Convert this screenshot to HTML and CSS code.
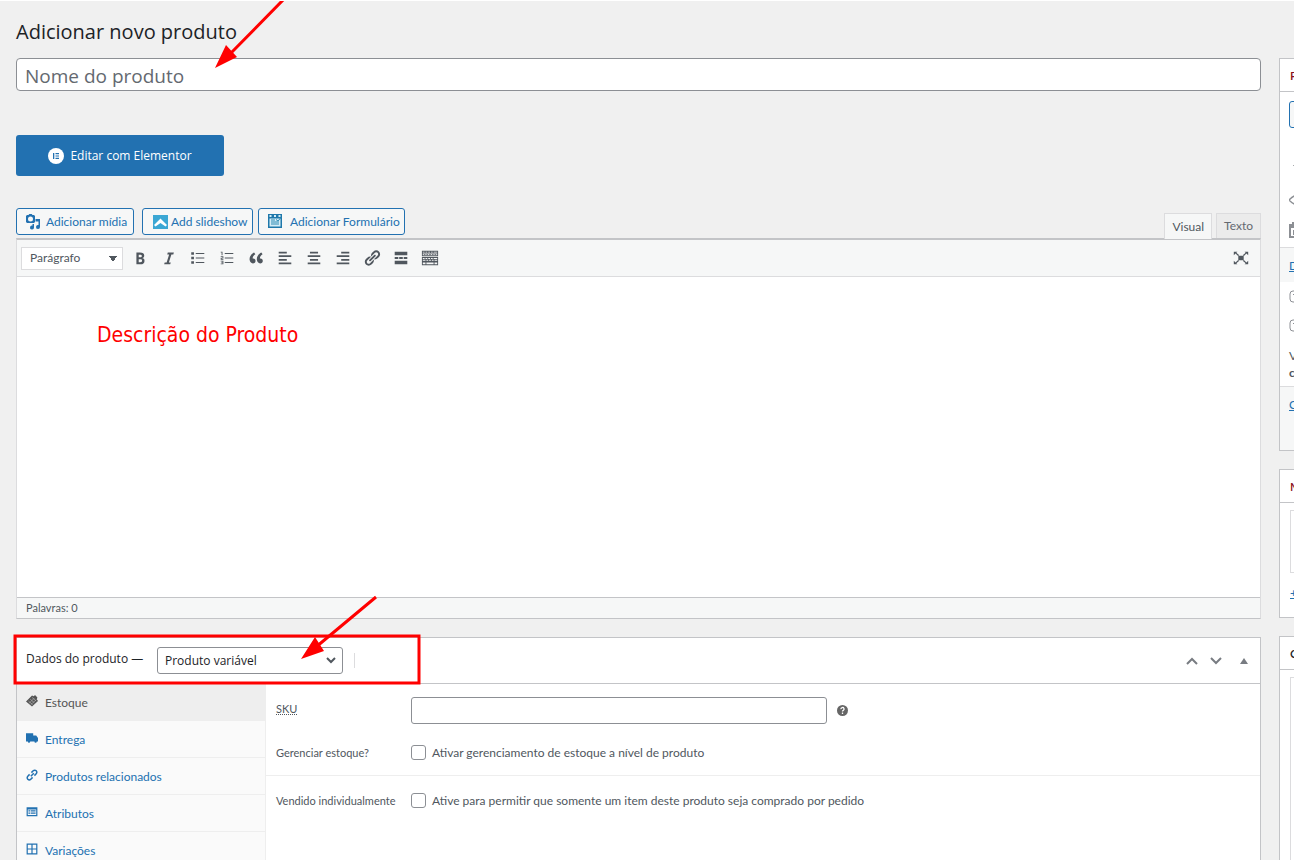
FILE: index.html
```html
<!DOCTYPE html>
<html lang="pt-BR">
<head>
  <meta charset="UTF-8">
  <title>Adicionar novo produto</title>
  <link rel="stylesheet" href="styles.css">
</head>
<body>
  <div class="wrap">
    <main class="post-body">
      <h1 class="page-title">Adicionar novo produto</h1>
      <input class="title-input" type="text" placeholder="Nome do produto" aria-label="Nome do produto">

      <button class="elementor-btn">
        <svg width="16" height="16" viewBox="0 0 16 16"><circle cx="8" cy="8" r="8" fill="#fff"/><path d="M5 5h1.3v6H5zM7.5 5H11v1.2H7.500zM7.500 7.400H11v1.200H7.500zM7.500 9.800H11V11H7.500z" fill="#2271b1"/></svg>
        Editar com Elementor
      </button>

      <div class="editor-tools">
        <div class="media-buttons">
          <button class="button media">
            <svg width="16" height="16" viewBox="0 0 16 16"><path fill="#2271b1" fill-rule="evenodd" d="M2 1h1.500l.8-1h2.400l.8 1H9l1 1v6L9 9H2L1 8V2zM5.500 2.500a2.500 2.500 0 1 0 0 5 2.500 2.500 0 0 0 0-5zM10.500 5h4.500v8a2 2 0 1 1-1.500-1.900V7.500h-3zM9 10v3.500a2 2 0 1 1-1.500-1.900V10z"/></svg>
            Adicionar mídia
          </button>
          <button class="button slides">
            <svg width="15" height="14" viewBox="0 0 15 14"><path fill="#3ba7d4" d="M0 0h15v14H0z"/><path d="M1 10l6.500-6.500L14 10l-1.500 1.500-5-3.500-5 3.500z" fill="#fff"/></svg>
            Add slideshow
          </button>
          <button class="button form">
            <svg width="15" height="15" viewBox="0 0 15 15"><path fill="#1f78ab" d="M0 0h14v14H0z"/><path fill="#d5edf6" d="M1.500 4.500h11v8h-11zM1.500 1h2v2h-2zM6 1h2v2H6zM10.500 1h2v2h-2z"/><path d="M3 6h4M3 8h8M3 10h8M8 5.500l2 1.500 3-3.500" fill="none" stroke="#2d8bb5"/></svg>
            Adicionar Formulário
          </button>
        </div>
        <div class="editor-tabs">
          <button class="editor-tab active">Visual</button>
          <button class="editor-tab">Texto</button>
        </div>
      </div>

      <section class="editor">
        <div class="toolbar">
          <select class="format" aria-label="Formato"><option>Parágrafo</option></select>
          <button class="tool" aria-label="Negrito"><svg viewBox="0 0 20 20"><path d="M6 4v13h4.540c1.370 0 2.460-.33 3.260-1 .8-.66 1.200-1.580 1.200-2.770 0-.84-.17-1.510-.51-2.010s-.9-.85-1.670-1.030v-.09c.57-.1 1.020-.4 1.360-.9s.51-1.130.51-1.910c0-1.140-.39-1.980-1.170-2.500C12.750 4.260 11.500 4 9.780 4H6zm2.570 5.150V6.260h1.360c.73 0 1.270.11 1.610.32.34.22.51.58.51 1.070 0 .54-.16.920-.47 1.150s-.82.35-1.510.35h-1.500zm0 2.190h1.600c1.440 0 2.160.53 2.160 1.610 0 .6-.17 1.050-.51 1.340s-.86.430-1.570.430H8.570v-3.380z"/></svg></button>
          <button class="tool" aria-label="Itálico"><svg viewBox="0 0 20 20"><path d="M14.780 6h-2.130l-2.800 9h2.120l-.62 2H4.600l.62-2h2.140l2.800-9H8.030l.62-2h6.750z"/></svg></button>
          <button class="tool" aria-label="Lista com marcadores"><svg viewBox="0 0 20 20"><path d="M2.500 3.500h3v3h-3zM2.500 8.500h3v3h-3zM2.500 13.500h3v3h-3zM7.500 4.500H17v1H7.500zM7.500 9.500H17v1H7.500zM7.500 14.500H17v1H7.500z"/></svg></button>
          <button class="tool" aria-label="Lista numerada"><svg viewBox="0 0 20 20"><path d="M3 3h2v4H4V4H3zM3 8h3v2.500H4v.7h2v.8H3V9.700h2v-.9H3zM3 13h3v4H3v-.8h2v-.8H3.500v-.8H5v-.8H3zM7.500 4.500H17v1H7.500zM7.500 9.500H17v1H7.500zM7.500 14.500H17v1H7.500z"/></svg></button>
          <button class="tool" aria-label="Citação"><svg viewBox="0 0 20 20"><path d="M9.490 13.220c0-.74-.2-1.380-.61-1.900-.62-.78-1.830-.88-2.530-.72-.29-1.650 1.110-3.750 2.920-4.650L7.880 4c-2.730 1.300-5.420 4.280-4.960 8.050C3.210 14.430 4.590 16 6.540 16c.85 0 1.560-.25 2.120-.75s.83-1.180.83-2.030zm8.050 0c0-.74-.2-1.380-.61-1.900-.63-.78-1.830-.88-2.530-.72-.29-1.650 1.110-3.750 2.920-4.650L15.930 4c-2.730 1.300-5.410 4.280-4.950 8.050.29 2.380 1.660 3.950 3.610 3.950.85 0 1.560-.25 2.120-.75s.83-1.180.83-2.030z"/></svg></button>
          <button class="tool" aria-label="Alinhar à esquerda"><svg viewBox="0 0 20 20"><path d="M3 3h9v2H3zM3 7h14v2H3zM3 11h9v2H3zM3 15h14v2H3z"/></svg></button>
          <button class="tool" aria-label="Centralizar"><svg viewBox="0 0 20 20"><path d="M5.500 3h9v2h-9zM3 7h14v2H3zM5.500 11h9v2h-9zM3 15h14v2H3z"/></svg></button>
          <button class="tool" aria-label="Alinhar à direita"><svg viewBox="0 0 20 20"><path d="M8 3h9v2H8zM3 7h14v2H3zM8 11h9v2H8zM3 15h14v2H3z"/></svg></button>
          <button class="tool" aria-label="Inserir link"><svg viewBox="0 0 20 20"><path d="M17.740 2.760c1.680 1.690 1.680 4.410 0 6.100l-1.530 1.520c-1.120 1.120-2.700 1.470-4.140 1.090l2.620-2.610.76-.77.760-.76c.84-.84.84-2.200 0-3.040-.84-.85-2.200-.85-3.040 0l-.77.76-3.380 3.380c-.37-1.440-.02-3.020 1.100-4.140l1.520-1.530c1.690-1.680 4.420-1.680 6.100 0zM8.590 13.430l5.340-5.340c.42-.42.42-1.100 0-1.520-.44-.43-1.130-.39-1.530 0l-5.330 5.340c-.42.42-.42 1.100 0 1.520.44.430 1.130.390 1.520 0zm-.76 2.290l4.140-4.150c.38 1.440.03 3.020-1.090 4.140l-1.520 1.530c-1.690 1.680-4.410 1.680-6.100 0-1.680-1.680-1.680-4.420 0-6.100l1.530-1.520c1.120-1.120 2.700-1.470 4.140-1.100l-4.140 4.150c-.85.84-.85 2.200 0 3.050.84.840 2.200.84 3.040 0z"/></svg></button>
          <button class="tool" aria-label="Leia mais"><svg viewBox="0 0 20 20"><path d="M17 7V3H3v4h14zM3 9h4v2H3zM8 9h4v2H8zM13 9h4v2h-4zM17 17v-4H3v4h14z"/></svg></button>
          <button class="tool" aria-label="Alternar barra de ferramentas"><svg viewBox="0 0 20 20"><path fill-rule="evenodd" d="M1 2h18v6H1zM2 3v1h2V3zM5 3v1h2V3zM8 3v1h2V3zM11 3v1h2V3zM14 3v1h4V3zM2 5v2h16V5zM3 5.500h2v1H3zM6 5.500h2v1H6zM9 5.500h2v1H9zM12 5.500h2v1h-2zM15 5.500h2v1h-2zM1 9h18v9H1zM2 10v1h2v-1zM5 10v1h2v-1zM8 10v1h2v-1zM11 10v1h2v-1zM14 10v1h4v-1zM2 12v1h3v-1zM6 12v1h2v-1zM9 12v1h2v-1zM12 12v1h2v-1zM15 12v1h3v-1zM2 15v2h3v-2zM6 15v2h8v-2zM15 15v2h3v-2z"/></svg></button>
          <button class="tool fullscreen" aria-label="Tela cheia"><svg viewBox="0 0 20 20"><path d="M7 7.500h6v5H7zM2 3h4L4.800 4.200l3 2.500-1 1-2.900-2.600L2 7zM18 3v4l-1.900-1.900-2.900 2.600-1-1 3-2.500L14 3zM2 17v-4l1.900 1.900 2.900-2.600 1 1-3 2.500L6 17zM18 17h-4l1.200-1.200-3-2.500 1-1 2.900 2.600L18 13z"/></svg></button>
        </div>
        <div class="editor-content">
          <p class="note">Descrição do Produto</p>
        </div>
        <div class="statusbar">Palavras: 0</div>
      </section>

      <section class="product-data">
        <header class="box-header">
          <label for="product-type">Dados do produto —</label>
          <select id="product-type" class="product-type"><option>Produto variável</option></select>
          <span class="divider"></span>
          <div class="handles">
            <button aria-label="Mover para cima"><svg width="12" height="8" viewBox="0 0 12 8"><path d="M1 7l5-5 5 5"/></svg></button>
            <button aria-label="Mover para baixo"><svg width="12" height="8" viewBox="0 0 12 8"><path d="M1 1l5 5 5-5"/></svg></button>
            <button aria-label="Alternar painel"><svg width="8" height="8" viewBox="0 0 8 8"><path class="solid" d="M4 1l4 6H0z"/></svg></button>
          </div>
        </header>
        <div class="panel-wrap">
          <nav class="data-tabs">
            <a href="#" class="active"><svg viewBox="0 0 20 20"><path d="M0 11L10 1l3 1 2-2 4 4-1 3 2 3-10 9z"/><path d="M4 10l7 6M7 7l7 6M10 4l7 6M5 14l9-9M8 16l9-8" stroke="#bbb" fill="none"/></svg>Estoque</a>
            <a href="#"><svg viewBox="0 0 20 20"><path d="M0 2h12v4h5l3 4v6h-2a2 2 0 0 1-4 0H7a2 2 0 0 1-4 0H0z"/></svg>Entrega</a>
            <a href="#"><svg viewBox="0 0 20 20"><path d="M8 12l5-5M9 6l3-3a3.500 3.500 0 0 1 5 5l-3 3M11 14l-3 3a3.500 3.500 0 0 1-5-5l3-3" fill="none" stroke="#2271b1" stroke-width="2.500"/></svg>Produtos relacionados</a>
            <a href="#"><svg viewBox="0 0 20 20"><path fill-rule="evenodd" d="M1 2h18v15H1zM3 6v9h14V6zM4 7h3v2H4zM8 7h8v2H8zM4 11h3v2H4zM8 11h8v2H8z"/></svg>Atributos</a>
            <a href="#"><svg viewBox="0 0 20 20"><path fill-rule="evenodd" d="M1 1h18v18H1zM3 3v6h6V3zM11 3v6h6V3zM3 11v6h6v-6zM11 11v6h6v-6z"/></svg>Variações</a>
          </nav>
          <div class="panel">
            <div class="group">
              <div class="field sku">
                <label for="sku"><abbr>SKU</abbr></label>
                <input id="sku" class="text" type="text">
                <svg class="help" width="11" height="11" viewBox="0 0 12 12"><circle cx="6" cy="6" r="6" fill="#666"/><path d="M4.300 4.500a1.700 1.700 0 1 1 2.500 1.400q-.8.400-.8 1.300M6 8.300v1.400" fill="none" stroke="#fff" stroke-width="1.400"/></svg>
              </div>
              <div class="field">
                <label for="stock">Gerenciar estoque?</label>
                <input id="stock" type="checkbox">
                <span class="description">Ativar gerenciamento de estoque a nível de produto</span>
              </div>
            </div>
            <div class="group">
              <div class="field">
                <label for="single">Vendido individualmente</label>
                <input id="single" type="checkbox">
                <span class="description">Ative para permitir que somente um item deste produto seja comprado por pedido</span>
              </div>
            </div>
          </div>
        </div>
      </section>
    </main>

    <aside class="side">
      <section class="side-box publish">
        <h2>P</h2>
        <div class="publish-body">
          <button class="side-btn" aria-label="Salvar"></button>
          <svg class="pin" width="16" height="16" viewBox="0 0 16 16"><path d="M4 8l3-3M5 9l4 4" stroke="#a7aaad" fill="none"/></svg>
          <svg width="16" height="16" viewBox="0 0 16 16"><path d="M0 8q8-9 16 0-8 9-16 0z" fill="none" stroke="#8c8f94" stroke-width="1.500"/><circle cx="8" cy="8" r="3" fill="#8c8f94"/></svg>
          <svg width="16" height="16" viewBox="0 0 16 16"><path d="M1 3h14v12H1zM4 0v5M1 5h14" fill="none" stroke="#8c8f94" stroke-width="2"/><path d="M4 8h3v5H4z" fill="#8c8f94"/></svg>
        </div>
        <div class="shaded copy"><a href="#">D</a></div>
        <div class="extras">
          <svg width="16" height="16" viewBox="0 0 16 16"><path d="M4 2h9q2 0 2 2v7q0 2-2 2H4q-3 0-3-3V5q0-3 3-3zM4 5l2 2" fill="none" stroke="#8c8f94"/></svg>
          <svg width="16" height="16" viewBox="0 0 16 16"><path d="M4 2h9q2 0 2 2v7q0 2-2 2H4q-3 0-3-3V5q0-3 3-3zM4 5l2 2" fill="none" stroke="#8c8f94"/></svg>
          <p>V<br><b>c</b></p>
        </div>
        <div class="shaded actions"><a href="#">C</a></div>
      </section>
      <section class="side-box metrics">
        <h2>M</h2>
        <div class="inner"></div>
        <a href="#">+</a>
      </section>
      <section class="side-box categories">
        <h2>C</h2>
        <div class="inner"></div>
      </section>
    </aside>

    <svg class="marks" width="440" height="700" viewBox="0 0 440 700">
      <path d="M285-2L230 54M376 597L316 647" stroke="#f00" stroke-width="3" fill="none"/>
      <path d="M215 68l11-23 11 12zM301 659l14-22 9 14z" fill="#f00"/>
      <path d="M15 636h404v47H15z" stroke="#f00" stroke-width="3" fill="none"/>
    </svg>
  </div>
</body>
</html>
```
FILE: styles.css
```css
:root {
  --blue: #2271b1;
  --border: #c3c4c7;
  --border-light: #dcdcde;
  --field: #8c8f94;
  --text: #50575e;
  --dark: #1d2327;
  --shade: #f6f7f7;
  --font-ui: "Open Sans", "Noto Sans", sans-serif;
  --font-small: Lato, "Open Sans", sans-serif;
}

* {
  box-sizing: border-box;
  margin: 0;
  padding: 0;
}

body {
  background: #f0f0f0;
  color: var(--text);
  font-family: var(--font-small);
  font-size: 12px;
  line-height: 18px;
}

button,
input,
select {
  font: inherit;
  color: inherit;
}

a {
  color: var(--blue);
}

.wrap {
  position: relative;
  display: grid;
  grid-template-columns: minmax(0, 1fr) 15px;
  gap: 18px;
  height: 100vh;
  padding-left: 16px;
  border-top: 1px solid #fff;
  overflow: hidden;
}

.page-title {
  padding-top: 17px;
  font-family: var(--font-ui);
  font-size: 20px;
  font-weight: 400;
  line-height: 28px;
  color: var(--dark);
}

.title-input {
  display: block;
  width: 100%;
  height: 33px;
  margin-top: 12px;
  padding: 2px 8px 0;
  border: 1px solid var(--field);
  border-radius: 4px;
  background: #fff;
  font-family: var(--font-ui);
  font-size: 19px;
}
.title-input::placeholder {
  color: #646970;
}

.elementor-btn {
  display: flex;
  align-items: center;
  justify-content: center;
  gap: 6px;
  width: 208px;
  height: 41px;
  margin-top: 44px;
  border: none;
  border-radius: 3px;
  background: var(--blue);
  color: #fff;
  font-family: var(--font-ui);
}

.editor-tools {
  display: flex;
  justify-content: space-between;
  align-items: flex-end;
  margin-top: 32px;
}

.media-buttons {
  display: flex;
  padding-bottom: 3px;
}

.button {
  display: flex;
  align-items: center;
  height: 27px;
  border: 1px solid var(--blue);
  border-radius: 3px;
  background: var(--shade);
  color: var(--blue);
  white-space: nowrap;
}
.media {
  width: 118px;
  gap: 5px;
  padding-left: 8px;
  margin-right: 8px;
}
.slides {
  width: 111px;
  gap: 3px;
  padding-left: 10px;
  margin-right: 5px;
}
.form {
  width: 147px;
  gap: 7px;
  padding-left: 9px;
}

.editor-tabs {
  display: flex;
  gap: 4px;
}

.editor-tab {
  height: 25px;
  padding: 0 7px;
  border: 1px solid var(--border-light);
  border-bottom: none;
  background: #ebebeb;
  color: #646970;
}
.editor-tab.active {
  position: relative;
  height: 26px;
  margin-bottom: -1px;
  background: var(--shade);
  color: var(--text);
}

.editor {
  border: 1px solid var(--border-light);
  border-top: 2px solid var(--border);
  border-bottom-color: var(--border);
}

.toolbar {
  display: flex;
  align-items: center;
  gap: 5px;
  height: 37px;
  padding: 0 7px 0 4px;
  border-bottom: 1px solid var(--border-light);
  background: var(--shade);
}

.format {
  width: 102px;
  height: 23px;
  padding-left: 8px;
  border: 1px solid var(--border-light);
  background: #fff;
  appearance: none;
  background-image: linear-gradient(to bottom right, var(--text) 50%, transparent 50%), linear-gradient(to bottom left, var(--text) 50%, transparent 50%);
  background-position: 91px 8px, 87px 8px;
  background-size: 4px 6px;
  background-repeat: no-repeat;
}

.tool {
  width: 24px;
  height: 24px;
  border: none;
  background: none;
}
.tool svg {
  display: block;
  width: 18px;
  height: 18px;
  margin: 0 auto;
  fill: var(--text);
}
.fullscreen {
  margin-left: auto;
}

.editor-content {
  height: 320px;
  padding: 44px 80px;
  background: #fff;
}
.note {
  color: #f00;
  font-family: "DejaVu Sans Condensed", "DejaVu Sans", sans-serif;
  font-size: 21px;
  line-height: 28px;
}

.statusbar {
  height: 21px;
  padding: 1px 9px;
  border-top: 1px solid var(--border);
  background: var(--shade);
  font-size: 11px;
}

.product-data {
  margin-top: 18px;
  border: 1px solid var(--border);
  background: #fff;
}

.box-header {
  display: flex;
  align-items: center;
  height: 46px;
  padding: 0 12px 0 9px;
  border-bottom: 1px solid var(--border);
  color: var(--dark);
  font-family: var(--font-ui);
}
.box-header label {
  width: 131px;
  padding-bottom: 3px;
  font-weight: 500;
  white-space: nowrap;
}

.product-type {
  width: 186px;
  height: 27px;
  padding-left: 7px;
  border: 1px solid var(--field);
  border-radius: 3px;
  appearance: none;
  background: #fff url("data:image/svg+xml,%3Csvg xmlns='http://www.w3.org/2000/svg' viewBox='0 0 10 7'%3E%3Cpath d='M1 1l4 4 4-4' fill='none' stroke='%2350575e' stroke-width='2'/%3E%3C/svg%3E") no-repeat right 6px center / 10px 7px;
}

.divider {
  width: 1px;
  height: 15px;
  margin-left: 11px;
  background: var(--border-light);
}

.handles {
  display: flex;
  gap: 12px;
  margin-left: auto;
}
.handles button {
  display: flex;
  align-items: center;
  border: none;
  background: none;
}
.handles button:last-child {
  margin-left: 6px;
}
.handles path {
  fill: none;
  stroke: #787c82;
  stroke-width: 2;
}
.handles .solid {
  fill: #787c82;
  stroke: none;
}

.panel-wrap {
  display: flex;
}

.data-tabs {
  flex: none;
  width: 249px;
  border-right: 1px solid #eee;
  background: #fafafa;
}
.data-tabs a {
  display: flex;
  align-items: center;
  gap: 7px;
  height: 37px;
  padding: 2px 0 0 9px;
  border-bottom: 1px solid #eee;
  text-decoration: none;
}
.data-tabs svg {
  width: 12px;
  height: 12px;
  margin-bottom: 4px;
  fill: currentColor;
}
.data-tabs .active {
  background: #eee;
  color: #555;
}

.panel {
  flex: 1;
}

.group {
  padding: 8px 10px 6px;
  border-bottom: 1px solid #eee;
}
.group:last-child {
  border-bottom: none;
}

.field {
  display: flex;
  align-items: center;
  height: 33px;
}
.field label {
  width: 135px;
  font-size: 11px;
  white-space: nowrap;
}
.field abbr {
  text-decoration: underline dotted;
}
.field input[type="checkbox"] {
  width: 15px;
  height: 15px;
  margin-right: 6px;
  border: 1px solid var(--field);
  border-radius: 3px;
  background: #fff;
  appearance: none;
}

.sku {
  height: 37px;
  margin-bottom: 7px;
}
.sku label {
  padding-bottom: 4px;
}
.text {
  width: 416px;
  height: 27px;
  border: 1px solid var(--field);
  border-radius: 3px;
}
.help {
  margin-left: 10px;
}

.side {
  padding-top: 57px;
}

.side-box {
  width: 280px;
  margin-bottom: 18px;
  border: 1px solid var(--border);
  background: #fff;
}
.side-box h2 {
  height: 33px;
  padding: 8px 10px;
  border-bottom: 1px solid var(--border);
  color: #8a1020;
  font-size: 12px;
  font-weight: 600;
}
.side-box svg {
  display: block;
}

.publish-body {
  height: 155px;
  padding: 9px;
}
.side-btn {
  display: block;
  width: 80px;
  height: 27px;
  border: 1px solid var(--blue);
  border-radius: 3px;
  background: var(--shade);
}
.publish-body svg {
  margin-top: 14px;
}
.publish-body .pin {
  margin-top: 30px;
  margin-bottom: 18px;
}

.shaded {
  padding: 9px;
  border-top: 1px solid var(--border-light);
  background: var(--shade);
}
.copy {
  height: 35px;
}
.extras {
  height: 104px;
  padding: 7px 9px;
}
.extras svg {
  margin-bottom: 13px;
}
.extras p {
  line-height: 17px;
}
.actions {
  height: 64px;
}

.metrics {
  height: 149px;
}
.inner {
  width: 240px;
  height: 63px;
  margin: 7px 10px 11px;
  border: 1px solid var(--border-light);
}
.metrics a {
  margin-left: 10px;
}
.categories h2 {
  color: var(--dark);
}
.categories .inner {
  height: 200px;
}

.marks {
  position: absolute;
  top: -1px;
  left: 0;
  pointer-events: none;
}
```
